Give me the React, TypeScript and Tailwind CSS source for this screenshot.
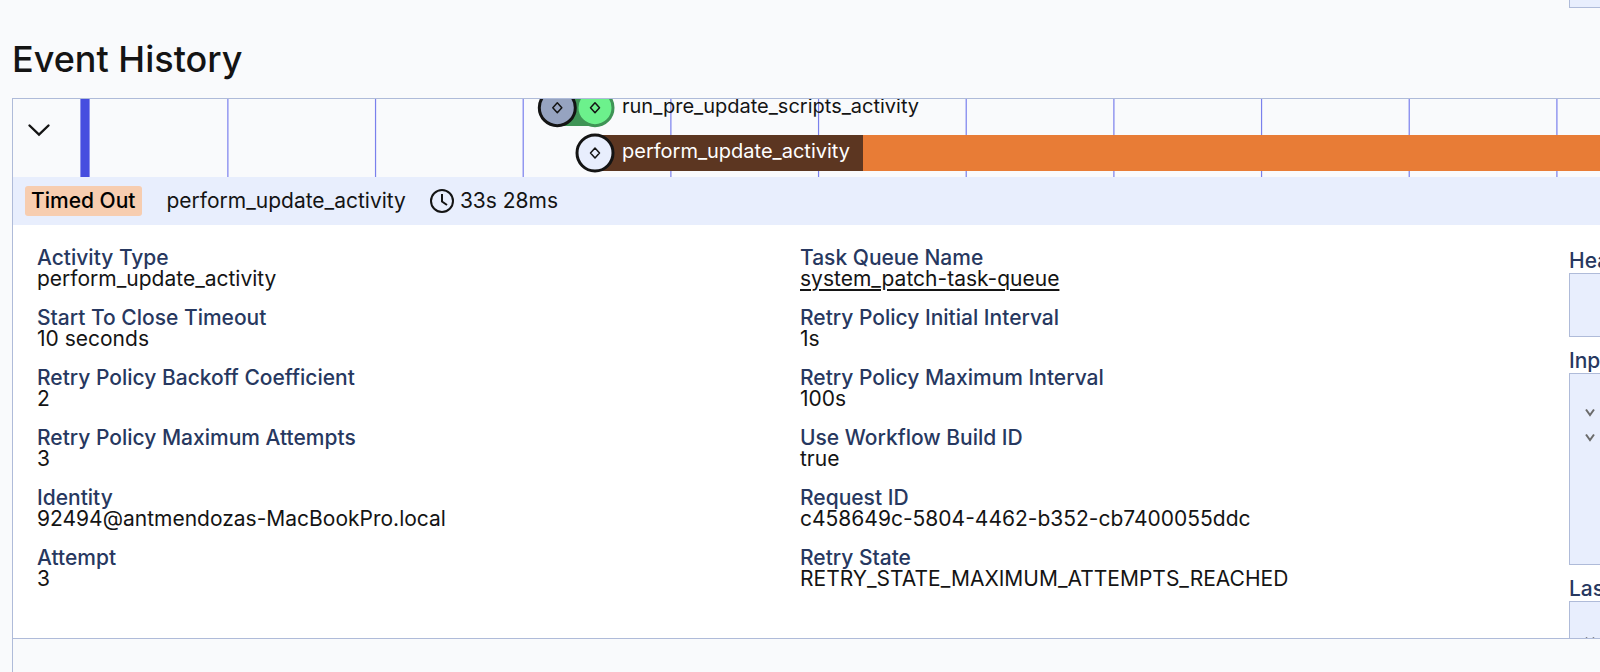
type Field = { label: string; value: string; href?: string };

const leftFields: Field[] = [
  { label: "Activity Type", value: "perform_update_activity" },
  { label: "Start To Close Timeout", value: "10 seconds" },
  { label: "Retry Policy Backoff Coefficient", value: "2" },
  { label: "Retry Policy Maximum Attempts", value: "3" },
  { label: "Identity", value: "92494@antmendozas-MacBookPro.local" },
  { label: "Attempt", value: "3" },
];

const rightFields: Field[] = [
  { label: "Task Queue Name", value: "system_patch-task-queue", href: "#task-queue" },
  { label: "Retry Policy Initial Interval", value: "1s" },
  { label: "Retry Policy Maximum Interval", value: "100s" },
  { label: "Use Workflow Build ID", value: "true" },
  { label: "Request ID", value: "c458649c-5804-4462-b352-cb7400055ddc" },
  { label: "Retry State", value: "RETRY_STATE_MAXIMUM_ATTEMPTS_REACHED" },
];

function FieldList({ fields }: { fields: Field[] }) {
  return (
    <dl className="flex min-w-0 flex-1 flex-col gap-[18px] pt-[22px]">
      {fields.map((f) => (
        <div key={f.label}>
          <dt className="font-medium text-[#273860]">{f.label}</dt>
          <dd>
            {f.href ? (
              <a href={f.href} className="underline decoration-2 underline-offset-3">
                {f.value}
              </a>
            ) : (
              f.value
            )}
          </dd>
        </div>
      ))}
    </dl>
  );
}

function Diamond({ cx, cy }: { cx: number; cy: number }) {
  return (
    <path
      d={`M${cx} ${cy - 5}L${cx + 4.5} ${cy}L${cx} ${cy + 5}L${cx - 4.5} ${cy}Z`}
      fill="none"
      stroke="#141414"
      strokeWidth="1.5"
      strokeLinejoin="round"
    />
  );
}

function Timeline() {
  return (
    <svg className="block h-[78px] min-w-0 flex-1 text-[20px]" role="img" aria-label="Event timeline">
      {Array.from({ length: 20 }, (_, i) => (
        <line
          key={i}
          x1={147.67 * (i + 1) + 0.2}
          x2={147.67 * (i + 1) + 0.2}
          y1="0"
          y2="78"
          stroke="#444ce7"
          strokeOpacity="0.7"
          strokeWidth="1.2"
        />
      ))}
      <rect x="0.4" y="0" width="9.2" height="78" fill="#464ddf" />
      <rect x="477.3" y="-9" width="37.5" height="36" fill="#3f9456" />
      <circle cx="515" cy="8.7" r="18" fill="#6cf18c" stroke="#3f9456" strokeWidth="3" />
      <circle cx="477.3" cy="8.7" r="18" fill="#96a3c0" stroke="#141414" strokeWidth="3" />
      <Diamond cx={477.3} cy={8.7} />
      <Diamond cx={515} cy={8.7} />
      <text x="542" y="14" fill="#141414">run_pre_update_scripts_activity</text>
      <rect x="515" y="36" width="100%" height="36" fill="#e87c36" />
      <rect x="515" y="36" width="268" height="36" fill="#5c3621" />
      <circle cx="515" cy="54" r="18" fill="#e8eefd" stroke="#141414" strokeWidth="3" />
      <Diamond cx={515} cy={54} />
      <text x="542" y="59" fill="#ffffff">perform_update_activity</text>
    </svg>
  );
}

function Caret() {
  return (
    <svg className="block h-[25px] w-[10px]" viewBox="0 0 10 25" fill="none" stroke="#6b6b6b" strokeWidth="2" aria-hidden="true">
      <path d="M1 8.5L5 14L9 8.5" />
    </svg>
  );
}

export default function App() {
  return (
    <main className="flex min-h-screen flex-col overflow-hidden bg-[#f9fafc] pl-3 font-['Inter',sans-serif] text-[21px] leading-[21px] text-[#141414]">
      <div className="flex justify-end">
        <div className="h-2 w-[31px] border-b border-l border-[#afbbd9] bg-[#e8eefd]" />
      </div>
      <h1 className="pt-6 pb-3 text-[36px] leading-[54px] font-medium">Event History</h1>
      <section className="flex flex-1 flex-col border-t border-l border-[#afbbd9]">
        <div className="flex">
          <button type="button" aria-label="Collapse timeline" className="flex w-[67px] shrink-0 items-center pb-4 pl-[14px]">
            <svg className="h-6 w-6" viewBox="0 0 24 24" fill="none" stroke="#141414" strokeWidth="2.4" strokeLinecap="round" aria-hidden="true">
              <path d="M2.5 7.5L12 16.5L21.5 7.5" />
            </svg>
          </button>
          <Timeline />
        </div>
        <header className="flex h-12 items-center gap-6 bg-[#e8eefd] px-3">
          <span className="rounded-[3px] bg-[#f7cdb0] pt-1 pr-[7px] pb-1 pl-[6px] leading-[22px] font-medium text-black">Timed Out</span>
          <span className="pb-0.5">perform_update_activity</span>
          <span className="flex items-center gap-[6px]">
            <svg className="h-6 w-6" viewBox="0 0 24 24" fill="none" stroke="#141414" strokeWidth="2" aria-hidden="true">
              <circle cx="12" cy="12" r="11" />
              <path d="M12 5V12.5L17 16" />
            </svg>
            <span className="pb-0.5">33s 28ms</span>
          </span>
        </header>
        <div className="flex h-[414px] overflow-hidden border-b border-[#afbbd9] bg-white pl-6">
          <FieldList fields={leftFields} />
          <FieldList fields={rightFields} />
          <aside className="ml-[6px] flex w-[31px] shrink-0 flex-col overflow-hidden pt-6 font-medium text-[#273860]">
            <h2 className="leading-6">Header</h2>
            <div className="h-16 w-[600px] shrink-0 border border-[#afbbd9] bg-[#e8eefd]" />
            <h2 className="pt-3 leading-6">Input</h2>
            <div className="flex h-48 w-[600px] shrink-0 flex-col border border-[#afbbd9] bg-[#e8eefd] pt-[27px] pl-[15px]">
              <Caret />
              <Caret />
            </div>
            <h2 className="pt-3 leading-6">Last</h2>
            <div className="h-48 w-[600px] shrink-0 border border-[#afbbd9] bg-[#e8eefd] pt-[27px] pl-[15px]">
              <Caret />
            </div>
          </aside>
        </div>
      </section>
    </main>
  );
}
